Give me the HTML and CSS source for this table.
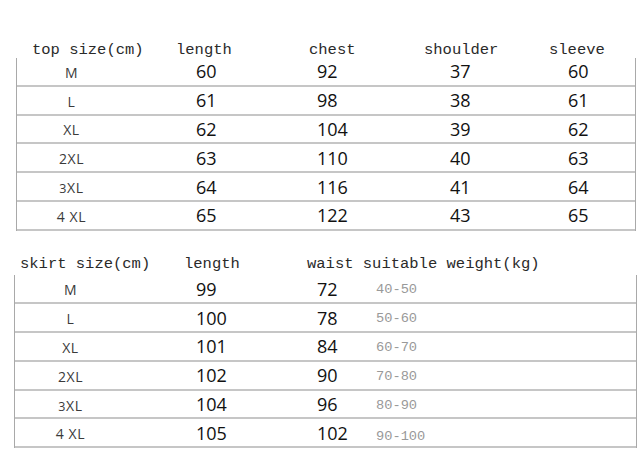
FILE: index.html
```html
<!DOCTYPE html>
<html lang="en">
<head>
<meta charset="utf-8">
<title>Size chart</title>
<link rel="stylesheet" href="styles.css">
</head>
<body>
<main class="page">
  <section class="chart chart-top">
    <div class="head head-top">
      <span class="head-first">top size(cm)</span>
      <span>length</span>
      <span>chest</span>
      <span>shoulder</span>
      <span>sleeve</span>
    </div>
    <div class="table table-top">
      <div class="row"><span class="size">M</span><span class="num">60</span><span class="num">92</span><span class="num">37</span><span class="num">60</span></div>
      <div class="row"><span class="size">L</span><span class="num">61</span><span class="num">98</span><span class="num">38</span><span class="num">61</span></div>
      <div class="row"><span class="size">XL</span><span class="num">62</span><span class="num">104</span><span class="num">39</span><span class="num">62</span></div>
      <div class="row"><span class="size">2XL</span><span class="num">63</span><span class="num">110</span><span class="num">40</span><span class="num">63</span></div>
      <div class="row"><span class="size"><span class="sm">3</span>XL</span><span class="num">64</span><span class="num">116</span><span class="num">41</span><span class="num">64</span></div>
      <div class="row"><span class="size">4 XL</span><span class="num">65</span><span class="num">122</span><span class="num">43</span><span class="num">65</span></div>
    </div>
  </section>
  <section class="chart chart-bottom">
    <div class="head head-bottom">
      <span class="head-first">skirt size(cm)</span>
      <span>length</span>
      <span>waist suitable weight(kg)</span>
    </div>
    <div class="table table-bottom">
      <div class="row"><span class="size">M</span><span class="num">99</span><span class="num">72</span><span class="weight">40-50</span></div>
      <div class="row"><span class="size">L</span><span class="num">100</span><span class="num">78</span><span class="weight">50-60</span></div>
      <div class="row"><span class="size">XL</span><span class="num">101</span><span class="num">84</span><span class="weight">60-70</span></div>
      <div class="row"><span class="size">2XL</span><span class="num">102</span><span class="num">90</span><span class="weight">70-80</span></div>
      <div class="row"><span class="size"><span class="sm">3</span>XL</span><span class="num">104</span><span class="num">96</span><span class="weight">80-90</span></div>
      <div class="row"><span class="size">4 XL</span><span class="num">105</span><span class="num">102</span><span class="weight low">90-100</span></div>
    </div>
  </section>
</main>
</body>
</html>
```

FILE: styles.css
```css
html, body {
  margin: 0;
  padding: 0;
  background: #ffffff;
}

.page {
  width: 640px;
  height: 453px;
  overflow: hidden;
  display: flex;
  flex-direction: column;
}

.head {
  display: grid;
  font-family: "Liberation Mono", "DejaVu Sans Mono", monospace;
  font-size: 15.5px;
  line-height: 16px;
  color: #2a2a2a;
  white-space: nowrap;
}

.head-top {
  margin-top: 42px;
  padding-left: 32px;
  grid-template-columns: 144px 133px 115px 125px auto;
}

.chart-bottom {
  margin-top: 25.2px;
}

.head-bottom {
  padding-left: 20px;
  margin-bottom: 3.5px;
  grid-template-columns: 164px 123px auto;
}

.table {
  border-left: 1px solid #a9a9a9;
  border-right: 1px solid #a9a9a9;
}

.table-top {
  margin-left: 16px;
  margin-right: 4px;
}

.table-bottom {
  margin-left: 14px;
  margin-right: 3px;
}

.row {
  display: grid;
  align-items: center;
  height: 28.8px;
  box-sizing: border-box;
  border-bottom: 2px solid #c6c6c6;
}

.table-top .row {
  grid-template-columns: 179px 121px 133px 118px 1fr;
}

.table-bottom .row {
  grid-template-columns: 181px 121px 59px 1fr;
}

.size {
  font-family: "Open Sans", "Noto Sans", sans-serif;
  font-size: 14px;
  letter-spacing: 0.6px;
  color: #3a3a3a;
  text-align: center;
  padding-right: 70px;
  padding-top: 2px;
}

.sm {
  font-size: 12.5px;
}

.num {
  font-family: "Open Sans", "Noto Sans", sans-serif;
  font-size: 18px;
  color: #111;
}

.weight {
  font-family: "Liberation Mono", "DejaVu Sans Mono", monospace;
  font-size: 13.7px;
  color: #999999;
  padding-top: 2px;
}

.weight.low {
  padding-top: 7px;
}
```
